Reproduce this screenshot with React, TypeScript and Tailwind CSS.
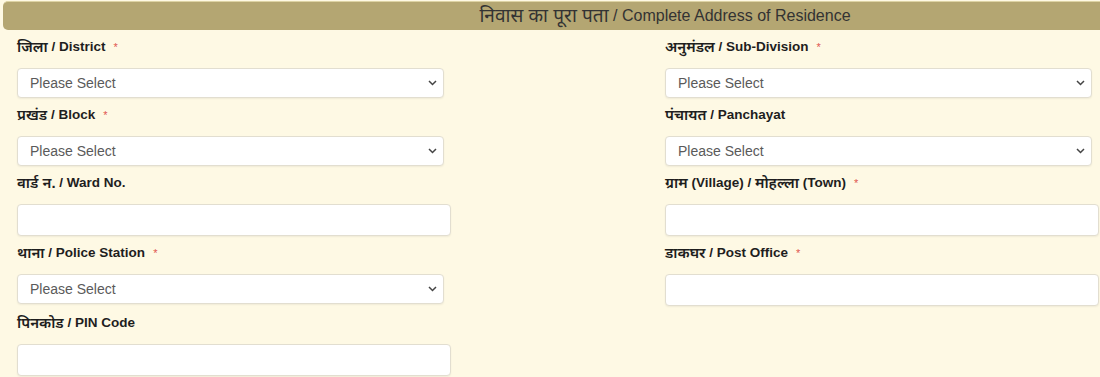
import React from "react";

const FONT = { fontFamily: '"Liberation Sans", Arial, "Noto Sans", sans-serif' };

function Label({ hi, en, req }: { hi: string; en: string; req?: boolean }) {
  return (
    <div className="mt-[7px] mb-[11px] h-[20px] leading-[20px] text-[13.5px] text-[#1e1e1e] flex items-center whitespace-pre">
      <span className="font-semibold text-[15px]">{hi}</span>
      <span className="font-bold">{" / " + en}</span>
      {req && <span className="ml-[8px] text-[#e0554f] text-[11px] leading-none">*</span>}
    </div>
  );
}

function Select() {
  return (
    <div className="relative w-[427px] h-[30px]">
      <select
        className="appearance-none w-full h-full bg-white border border-[#e2ded0] rounded-[4px] pl-[12px] text-[14px] text-[#5a5a5a] shadow-[0_1px_2px_rgba(0,0,0,0.06)] outline-none"
        style={FONT}
        defaultValue=""
      >
        <option value="">Please Select</option>
      </select>
      <svg
        className="pointer-events-none absolute right-[7px] top-[12px]"
        width="9"
        height="6"
        viewBox="0 0 9 6"
      >
        <path d="M1 1l3.5 3.5L8 1" fill="none" stroke="#444" strokeWidth="1.5" />
      </svg>
    </div>
  );
}

function Input({ w }: { w: number }) {
  return (
    <input
      type="text"
      className="block h-[32px] bg-white border border-[#e2ded0] rounded-[4px] shadow-[0_1px_2px_rgba(0,0,0,0.06)] outline-none"
      style={{ width: w }}
    />
  );
}

export default function App() {
  return (
    <div className="w-[1100px] h-[377px] overflow-hidden bg-[#fef9e4]" style={FONT}>
      <div className="pt-[1px] pl-[3px]">
        <div className="w-[1324px] h-[29px] bg-[#b4a672] border-t border-[#ddd3a4] rounded-[5px] flex items-center justify-center text-[16px] text-[#333] whitespace-pre">
          <span className="text-[19px]">निवास का पूरा पता</span>
          <span>{" / Complete Address of Residence"}</span>
        </div>
      </div>
      <div className="grid grid-cols-[648px_435px] pl-[17px]">
        <div>
          <Label hi="जिला" en="District" req />
          <Select />
        </div>
        <div>
          <Label hi="अनुमंडल" en="Sub-Division" req />
          <Select />
        </div>
        <div>
          <Label hi="प्रखंड" en="Block" req />
          <Select />
        </div>
        <div>
          <Label hi="पंचायत" en="Panchayat" />
          <Select />
        </div>
        <div>
          <Label hi="वार्ड न." en="Ward No." />
          <Input w={434} />
        </div>
        <div>
          <div className="mt-[7px] mb-[11px] h-[20px] leading-[20px] text-[13.5px] text-[#1e1e1e] flex items-center whitespace-pre">
            <span className="font-semibold text-[15px]">ग्राम</span>
            <span className="font-bold">{" (Village) / "}</span>
            <span className="font-semibold text-[15px]">मोहल्ला</span>
            <span className="font-bold">{" (Town)"}</span>
            <span className="ml-[8px] text-[#e0554f] text-[11px] leading-none">*</span>
          </div>
          <Input w={434} />
        </div>
        <div>
          <Label hi="थाना" en="Police Station" req />
          <Select />
        </div>
        <div>
          <Label hi="डाकघर" en="Post Office" req />
          <Input w={434} />
        </div>
        <div>
          <Label hi="पिनकोड" en="PIN Code" />
          <Input w={434} />
        </div>
      </div>
    </div>
  );
}
